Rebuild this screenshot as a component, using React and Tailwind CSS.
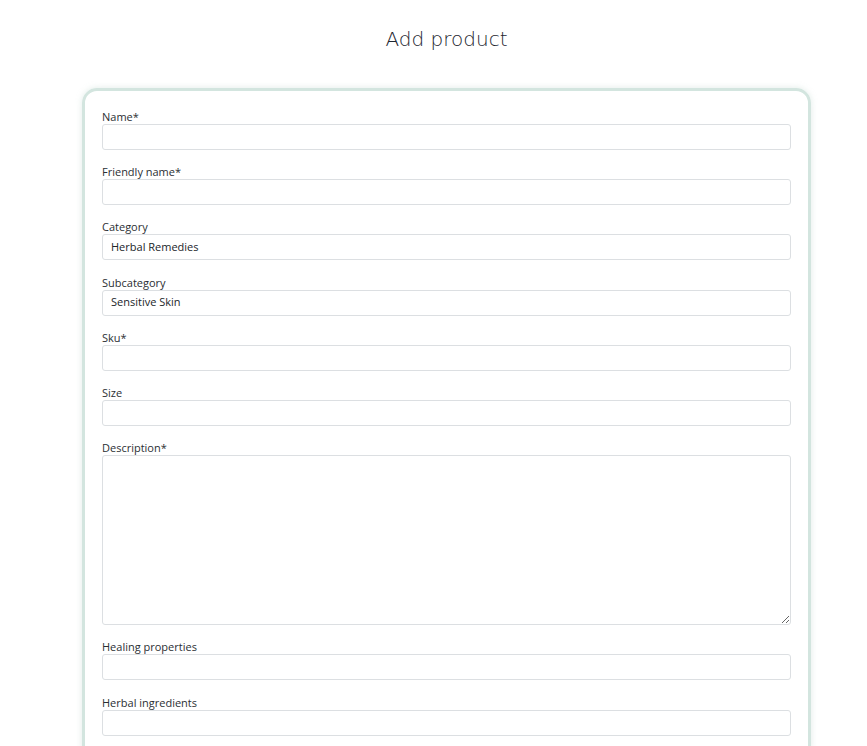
const fields = [
  { label: "Name*", value: "" },
  { label: "Friendly name*", value: "" },
  { label: "Category", value: "Herbal Remedies" },
  { label: "Subcategory", value: "Sensitive Skin" },
  { label: "Sku*", value: "" },
  { label: "Size", value: "" },
  { label: "Description*", value: "", area: true },
  { label: "Healing properties", value: "" },
  { label: "Herbal ingredients", value: "" },
];

const Field = ({ label, value, area }) => {
  return (
    <div className="mb-[14.2px]">
      <label className="block h-[15px] text-[11px] leading-[15px] text-[#2b2f33]">{label}</label>
      {area ? (
        <textarea
          readOnly
          className="block w-full h-[170px] border border-[#dcdfe2] rounded-[3px] bg-white resize-y"
        />
      ) : (
        <div className="h-[26px] border border-[#dcdfe2] rounded-[3px] bg-white flex items-center px-[8px] text-[11px] text-[#212529]">
          {value}
        </div>
      )}
    </div>
  );
};

export default function App() {
  return (
    <div className="min-h-[746px] bg-white pl-[82px] font-['Open_Sans','Noto_Sans',sans-serif]">
      <div className="w-[729px]">
        <h1 className="pt-[25px] h-[88px] text-center text-[20px] leading-[28px] text-[#1e2630] font-['DejaVu_Sans',sans-serif] font-light">
          Add product
        </h1>
        <div className="border-[3px] border-[#d3e5df] rounded-[15px] shadow-[0_0_6px_rgba(170,200,190,0.35)] pt-[18px] px-[17px] pb-[10px]">
          {fields.map((f) => (
            <Field key={f.label} {...f} />
          ))}
        </div>
      </div>
    </div>
  );
}
